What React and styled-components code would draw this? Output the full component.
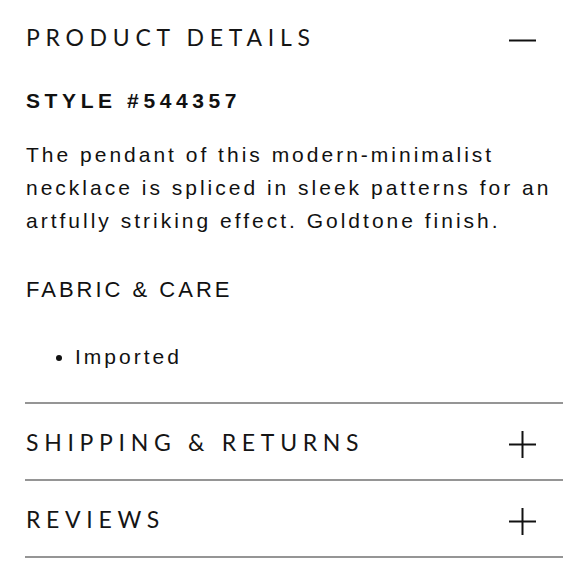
import React from 'react'
import styled, { createGlobalStyle } from 'styled-components'

const Global = createGlobalStyle`
  body {
    margin: 0;
    background: #fff;
    color: #111;
    font-family: "Liberation Sans", Arial, sans-serif;
  }
`

const Page = styled.div`
  width: 580px;
  padding: 0 17px 0 25px;
  box-sizing: border-box;
`

const Section = styled.section`
  border-bottom: 2px solid #959595;
`

const Header = styled.div`
  display: flex;
  align-items: center;
  justify-content: space-between;
  height: ${p => p.h}px;
  padding: 0 27px 0 1px;
`

const Title = styled.h2`
  margin: 0;
  font-family: Lato, "Open Sans", sans-serif;
  font-weight: 400;
  font-size: 23px;
  letter-spacing: 5.7px;
  color: #151515;
`

const Toggle = styled.svg`
  width: 27px;
  height: 27px;
  flex: none;
  margin-top: 6px;
`

const Body = styled.div`
  padding: 14px 0 32px 1px;
`

const StyleNo = styled.div`
  font-weight: 700;
  font-size: 21px;
  line-height: 26px;
  letter-spacing: 4.6px;
`

const Copy = styled.p`
  margin: 24px 0 0;
  font-size: 21px;
  line-height: 33px;
  letter-spacing: 3px;
`

const Subhead = styled.h3`
  margin: 40px 0 0;
  font-weight: 400;
  font-size: 22px;
  line-height: 26px;
  letter-spacing: 3px;
`

const List = styled.ul`
  margin: 41px 0 0;
  padding-left: 49px;
  font-size: 21px;
  line-height: 26px;
  letter-spacing: 3px;
`

function Icon({ open }) {
  return (
    <Toggle viewBox="0 0 27 27">
      <line x1="0" y1="13.5" x2="27" y2="13.5" stroke="#111" strokeWidth="2" />
      {!open && <line x1="13.5" y1="0" x2="13.5" y2="27" stroke="#111" strokeWidth="2" />}
    </Toggle>
  )
}

export default function App() {
  return (
    <Page>
      <Global />
      <Section>
        <Header h={74}>
          <Title>PRODUCT DETAILS</Title>
          <Icon open />
        </Header>
        <Body>
          <StyleNo>STYLE #544357</StyleNo>
          <Copy>
            The pendant of this modern-minimalist necklace is spliced in sleek patterns for an artfully striking effect. Goldtone finish.
          </Copy>
          <Subhead>FABRIC &amp; CARE</Subhead>
          <List>
            <li>Imported</li>
          </List>
        </Body>
      </Section>
      <Section>
        <Header h={75}>
          <Title>SHIPPING &amp; RETURNS</Title>
          <Icon />
        </Header>
      </Section>
      <Section>
        <Header h={75}>
          <Title>REVIEWS</Title>
          <Icon />
        </Header>
      </Section>
    </Page>
  )
}
